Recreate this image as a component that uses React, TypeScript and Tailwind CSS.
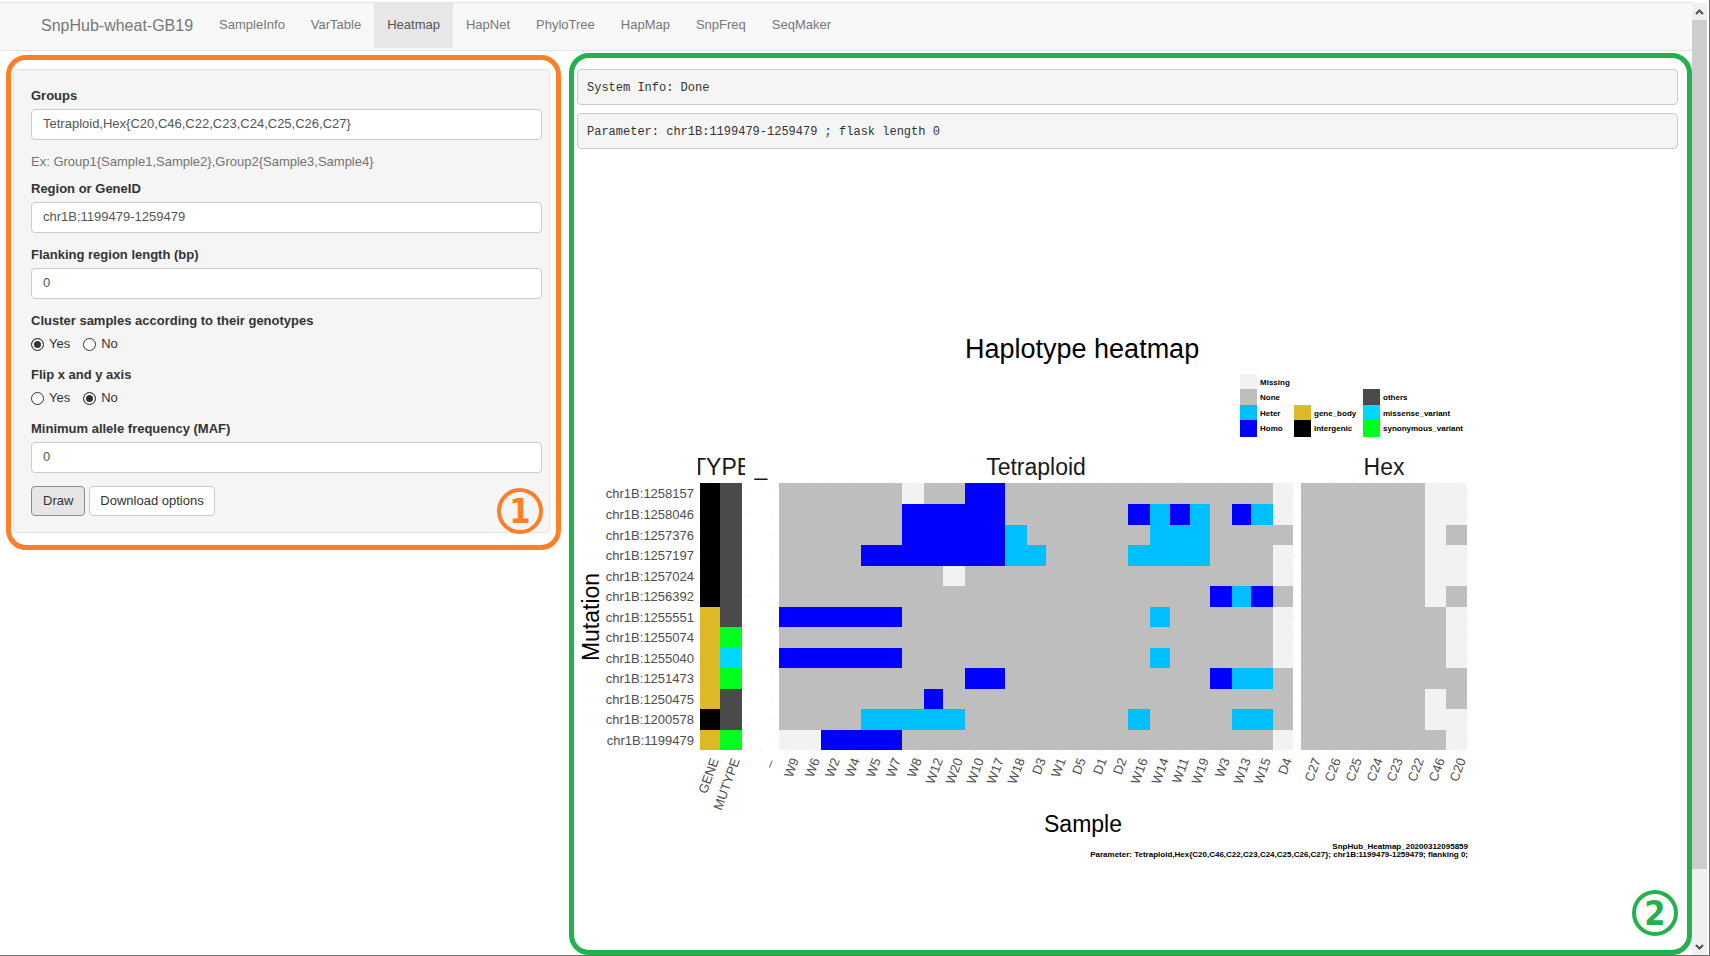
import type { ReactNode } from "react";

const NAV = ["SampleInfo", "VarTable", "Heatmap", "HapNet", "PhyloTree", "HapMap", "SnpFreq", "SeqMaker"];

const COLORS: Record<string, string> = {
  ".": "#bebebe",
  m: "#f2f2f2",
  h: "#00bfff",
  o: "#0000ff",
  g: "#ddb927",
  k: "#000000",
  x: "#4a4a4a",
  v: "#00d9ff",
  s: "#00ff1e",
};

const ROWS = [
  { name: "chr1B:1258157", info: "kx", tetra: "......m..oo.............m", hex: "......mm" },
  { name: "chr1B:1258046", info: "kx", tetra: "......ooooo......ohoh.ohm", hex: "......mm" },
  { name: "chr1B:1257376", info: "kx", tetra: "......oooooh......hhh....", hex: "......m." },
  { name: "chr1B:1257197", info: "kx", tetra: "....ooooooohh....hhhh...m", hex: "......mm" },
  { name: "chr1B:1257024", info: "kx", tetra: "........m...............m", hex: "......mm" },
  { name: "chr1B:1256392", info: "kx", tetra: ".....................oho.", hex: "......m." },
  { name: "chr1B:1255551", info: "gx", tetra: "oooooo............h.....m", hex: ".......m" },
  { name: "chr1B:1255074", info: "gs", tetra: "........................m", hex: ".......m" },
  { name: "chr1B:1255040", info: "gv", tetra: "oooooo............h.....m", hex: ".......m" },
  { name: "chr1B:1251473", info: "gs", tetra: ".........oo..........ohh.", hex: "........" },
  { name: "chr1B:1250475", info: "gx", tetra: ".......o.................", hex: "......m." },
  { name: "chr1B:1200578", info: "kx", tetra: "....hhhhh........h....hh.", hex: "......mm" },
  { name: "chr1B:1199479", info: "gs", tetra: "mmoooo..................m", hex: ".......m" },
];

const INFO = ["GENE", "MUTYPE"];
const TETRA = [
  "W9", "W6", "W2", "W4", "W5", "W7", "W8", "W12", "W20", "W10", "W17", "W18", "D3",
  "W1", "D5", "D1", "D2", "W16", "W14", "W11", "W19", "W3", "W13", "W15", "D4",
];
const HEX = ["C27", "C26", "C25", "C24", "C23", "C22", "C46", "C20"];

const INFO_EDGES = [123, 143, 165];
const TETRA_EDGES = [
  202, 223, 244, 264, 284, 305, 325, 347, 366, 388, 407, 428, 450,
  469, 490, 510, 531, 551, 573, 593, 613, 633, 655, 674, 696, 716,
];
const HEX_EDGES = [724, 745, 765, 786, 807, 827, 848, 869, 890];
const ROW_EDGES = [325, 346, 367, 387, 408, 428, 449, 469, 490, 510, 531, 551, 572, 592];

type Panel = { key: "info" | "tetra" | "hex"; names: string[]; edges: number[] };
const PANELS: Panel[] = [
  { key: "info", names: INFO, edges: INFO_EDGES },
  { key: "tetra", names: TETRA, edges: TETRA_EDGES },
  { key: "hex", names: HEX, edges: HEX_EDGES },
];

const LEGEND = [
  { x: 663, y: 216, h: 15, color: "m", label: "Missing" },
  { x: 663, y: 231, h: 16, color: ".", label: "None" },
  { x: 663, y: 247, h: 15, color: "h", label: "Heter" },
  { x: 663, y: 262, h: 17, color: "o", label: "Homo" },
  { x: 717, y: 247, h: 15, color: "g", label: "gene_body" },
  { x: 717, y: 262, h: 17, color: "k", label: "intergenic" },
  { x: 786, y: 231, h: 16, color: "x", label: "others" },
  { x: 786, y: 247, h: 15, color: "v", label: "missense_variant" },
  { x: 786, y: 262, h: 17, color: "s", label: "synonymous_variant" },
];

const FIRST = ROW_EDGES[0];
const LAST = ROW_EDGES[ROW_EDGES.length - 1];

function Tick({ x, label }: { x: number; label: string }) {
  return (
    <>
      <path d={`M${x} ${FIRST - 2}v2M${x} ${LAST}v2`} stroke="#ececec" />
      <text transform={`translate(${x + 9} 602) rotate(-70)`} textAnchor="end" fontSize="13" fill="#4d4d4d">
        {label}
      </text>
    </>
  );
}

function Heatmap() {
  return (
    <svg
      viewBox="0 0 901 742"
      className="mt-px block w-[901px] max-w-full"
      role="img"
      aria-label="Haplotype heatmap"
      fontFamily='"Liberation Sans", Arial, sans-serif'
    >
      <text x="388" y="200" fontSize="27">Haplotype heatmap</text>

      {LEGEND.map((l) => (
        <g key={l.label}>
          <rect x={l.x} y={l.y} width="17" height={l.h} fill={COLORS[l.color]} />
          <text x={l.x + 20} y={l.y + 11} fontSize="8" fontWeight="700">{l.label}</text>
        </g>
      ))}

      <clipPath id="strip">
        <rect x="121" y="290" width="47" height="34" />
      </clipPath>
      <g fontSize="23" fill="#1a1a1a">
        <text x="115" y="317" clipPath="url(#strip)">TYPE</text>
        <text x="184" y="317" textAnchor="middle">_</text>
        <text x="459" y="317" textAnchor="middle">Tetraploid</text>
        <text x="807" y="317" textAnchor="middle">Hex</text>
      </g>

      {ROWS.map((row, r) => {
        const y = ROW_EDGES[r];
        const h = ROW_EDGES[r + 1] - y;
        const mid = y + 10;
        return (
          <g key={row.name}>
            <text x="117" y={y + 15} textAnchor="end" fontSize="13" fill="#4d4d4d">{row.name}</text>
            <path d={`M121 ${mid}h2M171 ${mid}h2M194 ${mid}h2M716 ${mid}h2M722 ${mid}h2M890 ${mid}h2`} stroke="#ececec" />
            {PANELS.map((p) =>
              row[p.key].split("").map((c, i) => (
                <rect
                  key={p.key + i}
                  x={p.edges[i]}
                  y={y}
                  width={p.edges[i + 1] - p.edges[i]}
                  height={h}
                  fill={COLORS[c]}
                  shapeRendering="crispEdges"
                />
              ))
            )}
          </g>
        );
      })}

      {PANELS.map((p) =>
        p.names.map((n, i) => <Tick key={n} x={Math.round((p.edges[i] + p.edges[i + 1]) / 2)} label={n} />)
      )}
      <Tick x={184} label="_" />

      <text transform="translate(22 459) rotate(-90)" textAnchor="middle" fontSize="23">Mutation</text>
      <text x="506" y="674" textAnchor="middle" fontSize="23">Sample</text>
      <g fontSize="8" fontWeight="700" textAnchor="end">
        <text x="891" y="691">SnpHub_Heatmap_20200312095859</text>
        <text x="891" y="699">
          {"Parameter: Tetraploid,Hex{C20,C46,C22,C23,C24,C25,C26,C27}; chr1B:1199479-1259479; flanking 0;"}
        </text>
      </g>
    </svg>
  );
}

function Field({ id, label, value }: { id: string; label: string; value: string }) {
  return (
    <div className="flex flex-col gap-1">
      <label htmlFor={id} className="font-bold leading-[18px]">{label}</label>
      <input
        id={id}
        type="text"
        defaultValue={value}
        className="h-[31px] w-full rounded border border-[#ccc] bg-white px-[11px] pb-0.5 text-[#555]"
      />
    </div>
  );
}

function YesNo({ name, label, value }: { name: string; label: string; value: string }) {
  return (
    <fieldset className="pb-px">
      <legend className="font-bold leading-[18px]">{label}</legend>
      <div className="mt-[5px] flex gap-[13px]">
        {["Yes", "No"].map((o) => (
          <label key={o} className="flex items-start gap-[5px] leading-[17px]">
            <input
              type="radio"
              name={name}
              defaultChecked={o === value}
              className="mt-[3px] size-[13px] appearance-none rounded-full border border-[#333] bg-white checked:bg-[#333] checked:shadow-[inset_0_0_0_2px_white]"
            />
            {o}
          </label>
        ))}
      </div>
    </fieldset>
  );
}

function Badge({ className, children }: { className: string; children: ReactNode }) {
  return (
    <span
      className={`absolute flex size-[46px] items-center justify-center rounded-full border-4 font-['DejaVu_Sans_Condensed','DejaVu_Sans',sans-serif] text-[34px] leading-none font-bold ${className}`}
    >
      {children}
    </span>
  );
}

function Log({ children }: { children: ReactNode }) {
  return (
    <pre className="rounded border border-[#ccc] bg-[#f5f5f5] px-[9px] pt-[9px] pb-[7px] font-['Liberation_Mono',monospace] text-xs leading-[18px] text-[#333]">
      {children}
    </pre>
  );
}

export default function App() {
  return (
    <div className="flex min-h-screen border-r border-b border-[#6b6b6b] bg-white font-['Liberation_Sans',Arial,sans-serif] text-[13px] text-[#333]">
      <div className="flex min-w-0 flex-1 flex-col">
        <nav className="mt-0.5 flex h-[49px] items-start border-y border-[#e2e2e2] bg-[#f8f8f8] pl-[41px] leading-[43px] text-[#777]">
          <a href="#home" className="mr-[13px] text-base leading-[45px]">SnpHub-wheat-GB19</a>
          {NAV.map((n) => (
            <a
              key={n}
              href={`#${n}`}
              className={n === "Heatmap" ? "bg-[#e7e7e7] px-[13px] pb-0.5 text-[#555]" : "px-[13px] pb-0.5"}
            >
              {n}
            </a>
          ))}
        </nav>

        <main className="flex flex-1">
          <div className="w-1/3 pt-1 pr-[3px] pl-[6px]">
            <section className="relative rounded-[20px] border-5 border-[#ff7f27] px-0.5 pt-[9px] pb-3">
              <form className="mr-1 flex flex-col rounded border border-[#e3e3e3] bg-[#f5f5f5] pt-[17px] pr-[7px] pb-4 pl-[17px]">
                <Field id="groups" label="Groups" value="Tetraploid,Hex{C20,C46,C22,C23,C24,C25,C26,C27}" />
                <p className="mt-[13px] mb-[9px] leading-[18px] text-[#737373]">
                  {"Ex: Group1{Sample1,Sample2},Group2{Sample3,Sample4}"}
                </p>
                <div className="flex flex-col gap-[13px]">
                  <Field id="region" label="Region or GeneID" value="chr1B:1199479-1259479" />
                  <Field id="flank" label="Flanking region length (bp)" value="0" />
                  <YesNo name="cluster" label="Cluster samples according to their genotypes" value="Yes" />
                  <YesNo name="flip" label="Flip x and y axis" value="No" />
                  <Field id="maf" label="Minimum allele frequency (MAF)" value="0" />
                  <div className="flex gap-1">
                    <button type="button" className="h-[30px] rounded border border-[#8c8c8c] bg-[#e6e6e6] px-[11px]">
                      Draw
                    </button>
                    <button type="button" className="h-[30px] rounded border border-[#ccc] bg-white px-[10px]">
                      Download options
                    </button>
                  </div>
                </div>
              </form>
              <Badge className="right-[13px] bottom-[11px] border-[#ff7f27] text-[#ff7f27]">1</Badge>
            </section>
          </div>

          <div className="flex min-w-0 flex-1 pt-0.5 pl-[5px]">
            <section className="relative flex min-w-0 flex-1 flex-col gap-2 rounded-[20px] border-5 border-[#22b14c] pt-[11px] pr-[9px] pl-[3px]">
              <Log>System Info: Done</Log>
              <Log>Parameter: chr1B:1199479-1259479 ; flask length 0</Log>
              <Heatmap />
              <Badge className="right-[9px] bottom-[14px] border-[#22b14c] text-[#22b14c]">2</Badge>
            </section>
          </div>
        </main>
      </div>

      <div className="mt-[3px] mr-0.5 flex w-[15px] flex-col items-center bg-[#f0f0f0] text-[#505050]" aria-hidden="true">
        <svg viewBox="0 0 15 17" className="h-[17px] w-[15px]" fill="none" stroke="currentColor" strokeWidth="2">
          <path d="M4 11l3.500-3.500L11 11" />
        </svg>
        <div className="w-full flex-[849] bg-[#cdcdcd]" />
        <div className="flex-[69]" />
        <svg viewBox="0 0 15 17" className="h-[17px] w-[15px]" fill="none" stroke="currentColor" strokeWidth="2">
          <path d="M4 7l3.500 3.500L11 7" />
        </svg>
      </div>
    </div>
  );
}
